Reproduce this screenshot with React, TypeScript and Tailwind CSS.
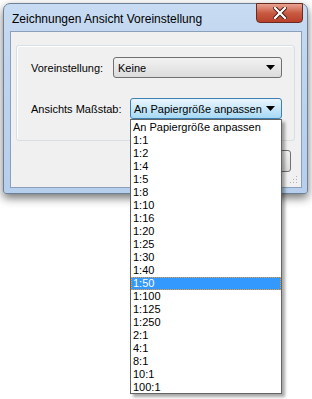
import React from "react";

const items = [
  "An Papiergröße anpassen",
  "1:1",
  "1:2",
  "1:4",
  "1:5",
  "1:8",
  "1:10",
  "1:16",
  "1:20",
  "1:25",
  "1:30",
  "1:40",
  "1:50",
  "1:100",
  "1:125",
  "1:250",
  "2:1",
  "4:1",
  "8:1",
  "10:1",
  "100:1",
];

function Arrow() {
  return (
    <svg width="9" height="5" viewBox="0 0 9 5">
      <path d="M0 0 H9 L4.5 5 Z" fill="#000" />
    </svg>
  );
}

export default function App() {
  return (
    <div
      className="relative w-[312px] h-[399px] bg-white overflow-hidden"
      style={{ fontFamily: "'Liberation Sans', Arial, sans-serif" }}
    >
      {/* window */}
      <div className="ml-[3px] mt-[3px] w-[305px] h-[191px] rounded-t-[7px] rounded-b-[3px] border border-[#6e8097] bg-gradient-to-b from-[#c7dbf2] via-[#bcd3ee] to-[#b6cfec] shadow-[0_4px_10px_rgba(0,0,0,0.55)] flex flex-col">
        <div className="h-[27px] flex items-start pl-[8px] relative">
          <span className="mt-[7px] text-[12px] leading-[16px] text-black whitespace-nowrap">
            Zeichnungen Ansicht Voreinstellung
          </span>
          <div className="absolute right-[4px] top-[-1px] w-[47px] h-[20px] rounded-b-[4px] border border-[#6b2a20] bg-gradient-to-b from-[#e8a493] via-[#c95a42] to-[#b8402a] flex items-center justify-center">
            <svg width="14" height="12" viewBox="0 0 14 12">
              <path
                d="M2 1 L12 11 M12 1 L2 11"
                stroke="#3c1610"
                strokeWidth="4"
                strokeLinecap="square"
              />
              <path
                d="M2 1 L12 11 M12 1 L2 11"
                stroke="#ffffff"
                strokeWidth="2.2"
                strokeLinecap="square"
              />
            </svg>
          </div>
        </div>
        {/* client */}
        <div className="ml-[6px] w-[292px] h-[157px] border border-[#8aa0ba] bg-[#f0f0f0] flex flex-col relative">
          <div className="mt-[13px] ml-[5px] w-[279px] h-[96px] border border-[#d5dfe5] rounded-[3px] shadow-[inset_1px_1px_0_#fff] flex flex-col">
            <div className="flex items-center mt-[11px] h-[21px]">
              <span className="ml-[14px] w-[82px] text-[11px] text-black leading-[14px] whitespace-nowrap">
                Voreinstellung:
              </span>
              <div className="w-[169px] h-[21px] rounded-[3px] border border-[#707070] bg-gradient-to-b from-[#f2f2f2] to-[#dcdcdc] flex items-center justify-between pl-[4px] pr-[6px]">
                <span className="text-[11px] leading-[14px] text-black">Keine</span>
                <Arrow />
              </div>
            </div>
            <div className="flex items-center mt-[20px] h-[21px]">
              <span className="ml-[14px] w-[99px] text-[11px] text-black leading-[14px] whitespace-nowrap">
                Ansichts Maßstab:
              </span>
              <div className="w-[152px] h-[21px] rounded-[3px] border border-[#3c7fb1] bg-gradient-to-b from-[#eaf6fd] to-[#a7d9f5] flex items-center justify-between pl-[3px] pr-[6px]">
                <span className="text-[11px] leading-[14px] text-black whitespace-nowrap">
                  An Papiergröße anpassen
                </span>
                <Arrow />
              </div>
            </div>
          </div>
          <div className="absolute left-[205px] top-[118px] w-[75px] h-[22px] rounded-[3px] border border-[#707070] bg-gradient-to-b from-[#f2f2f2] to-[#dcdcdc]" />
          <svg
            className="absolute right-[3px] bottom-[3px]"
            width="8"
            height="8"
            viewBox="0 0 8 8"
          >
            <rect x="6" y="0" width="1" height="1" fill="#b0b0b0" />
            <rect x="3" y="3" width="1" height="1" fill="#b0b0b0" />
            <rect x="6" y="3" width="1" height="1" fill="#b0b0b0" />
            <rect x="0" y="6" width="1" height="1" fill="#b0b0b0" />
            <rect x="3" y="6" width="1" height="1" fill="#b0b0b0" />
            <rect x="6" y="6" width="1" height="1" fill="#b0b0b0" />
          </svg>
        </div>
      </div>

      {/* dropdown list */}
      <div className="absolute left-[130px] top-[119px] w-[152px] h-[275px] bg-white border border-[#646464] shadow-[3px_3px_3px_rgba(0,0,0,0.35)] flex flex-col pt-[1px]">
        {items.map((it) =>
          it === "1:50" ? (
            <div
              key={it}
              className="h-[13px] bg-[#3399ff] outline outline-1 outline-dotted outline-[#f09a3a] -outline-offset-1 text-white text-[11px] leading-[13px] pl-[2px]"
            >
              {it}
            </div>
          ) : (
            <div
              key={it}
              className="h-[13px] text-black text-[11px] leading-[13px] pl-[2px] whitespace-nowrap"
            >
              {it}
            </div>
          )
        )}
      </div>
    </div>
  );
}
